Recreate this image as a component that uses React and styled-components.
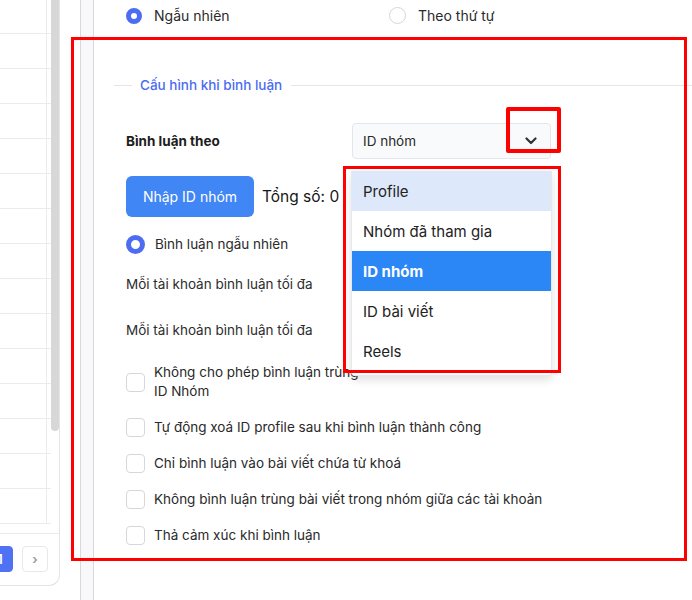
import React from "react";
import styled, { createGlobalStyle } from "styled-components";

const Global = createGlobalStyle`
  html, body { margin: 0; padding: 0; background: #fff; }
  body { width: 692px; height: 600px; overflow: hidden; font-family: Inter, "Noto Sans", sans-serif; color: #222; }
  * { box-sizing: border-box; }
`;

const Page = styled.div`
  position: relative;
  display: flex;
  width: 692px;
  height: 600px;
  overflow: hidden;
`;

/* ---------- left table card ---------- */
const LeftCard = styled.div`
  width: 60px;
  height: 586px;
  flex: none;
  border-right: 1px solid #e4e4e7;
  border-bottom: 1px solid #e4e4e7;
  border-bottom-right-radius: 11px;
  display: flex;
  flex-direction: column;
  overflow: hidden;
`;

const TableWrap = styled.div`
  height: 533px;
  display: flex;
  flex: none;
`;

const Rows = styled.div`
  width: 51px;
  display: flex;
  flex-direction: column;
`;

const Row = styled.div`
  height: ${(p) => (p.$first ? 34 : 35)}px;
  flex: none;
  display: flex;
  border-bottom: 1px solid #ebebeb;
`;

const CellMain = styled.div`
  width: 47px;
  border-right: 1px solid #ebebeb;
`;

const ScrollTrack = styled.div`
  width: 8px;
  flex: none;
`;

const Thumb = styled.div`
  width: 8px;
  height: 431px;
  background: #d7d7d7;
  border-radius: 0 0 4px 4px;
`;

const Pager = styled.div`
  border-top: 1px solid #ebebeb;
  display: flex;
  justify-content: flex-end;
  gap: 9px;
  padding: 12px 11px 0 0;
`;

const PageBtn = styled.div`
  width: 26px;
  height: 26px;
  flex: none;
  border-radius: 4px;
  display: flex;
  align-items: center;
  justify-content: center;
  font-size: 13px;
  font-weight: 600;
  background: ${(p) => (p.$active ? "#4f72f4" : "#fff")};
  color: ${(p) => (p.$active ? "#fff" : "#999")};
  border: 1px solid ${(p) => (p.$active ? "#4f72f4" : "#e8e8e8")};
`;

const Spacer = styled.div`
  width: 20px;
  flex: none;
`;

const Strip = styled.div`
  width: 14px;
  flex: none;
  height: 600px;
  background: #f8f8fa;
  border-left: 1px solid #d6d9df;
  border-right: 1px solid #d6d9df;
`;

/* ---------- main ---------- */
const Main = styled.div`
  flex: 1;
  display: flex;
  flex-direction: column;
  padding-top: 7px;
`;

const TopRadios = styled.div`
  display: grid;
  grid-template-columns: 263px 1fr;
  padding-left: 32px;
  height: 16px;
`;

const RadioLabel = styled.label`
  display: flex;
  align-items: center;
  gap: 12px;
  font-size: 14px;
  line-height: 16px;
  color: #2a2a2a;
`;

const Radio = styled.span`
  width: ${(p) => p.$size}px;
  height: ${(p) => p.$size}px;
  flex: none;
  border-radius: 50%;
  background: #fff;
  border: ${(p) => (p.$checked ? "5px solid #4e6cf2" : "1px solid #d3d6dc")};
`;

const Legend = styled.div`
  display: flex;
  align-items: center;
  gap: 8px;
  margin: 52px 0 0 20px;
  height: 20px;
  font-size: 13.5px;
  font-weight: 500;
  color: #4a6cf0;
  white-space: nowrap;
  &::before {
    content: "";
    width: 18px;
    height: 1px;
    background: #e3e5e8;
  }
  &::after {
    content: "";
    flex: 1;
    height: 1px;
    margin-left: 1px;
    background: #e3e5e8;
  }
`;

const Body = styled.div`
  padding-left: 32px;
  display: flex;
  flex-direction: column;
`;

const FieldRow = styled.div`
  display: grid;
  grid-template-columns: 226px 199px;
  align-items: center;
  margin-top: ${(p) => p.$mt}px;
`;

const FieldLabel = styled.div`
  font-size: 13.5px;
  font-weight: ${(p) => (p.$bold ? 700 : 400)};
  color: ${(p) => (p.$bold ? "#1d1d1d" : "#2d2d2d")};
`;

const SelectBox = styled.div`
  position: relative;
  height: 36px;
  background: #f9fafb;
  border: 1px solid #e3e6eb;
  border-radius: 4px;
  display: flex;
  align-items: center;
  justify-content: space-between;
  padding: 0 13px 0 10px;
  font-size: 13.5px;
  color: #2a2a2a;
`;

const NumberInput = styled.div`
  height: 36px;
  border: 1px solid #e3e6eb;
  border-radius: 4px;
  background: #fff;
`;

const Menu = styled.div`
  position: absolute;
  top: 47px;
  left: -2px;
  width: 201px;
  background: #fff;
  border: 1px solid #e6e8ec;
  border-top: none;
  border-radius: 0 0 4px 4px;
  box-shadow: 0 4px 10px rgba(0, 0, 0, 0.12);
  padding-bottom: 4px;
  z-index: 5;
`;

const MenuItem = styled.div`
  height: 40px;
  display: flex;
  align-items: center;
  padding-left: 11px;
  font-size: 15px;
  font-weight: ${(p) => (p.$selected ? 700 : 400)};
  color: ${(p) => (p.$selected ? "#fff" : "#222")};
  background: ${(p) => (p.$selected ? "#2c87f6" : p.$hover ? "#dde8fb" : "#fff")};
`;

const ButtonRow = styled.div`
  display: flex;
  align-items: center;
  gap: 8px;
  margin-top: 17px;
`;

const PrimaryButton = styled.button`
  width: 128px;
  height: 41px;
  border: none;
  border-radius: 6px;
  background: #4086f4;
  color: #fff;
  font-family: inherit;
  font-size: 14px;
  padding: 0;
`;

const Total = styled.span`
  font-size: 15.5px;
  color: #161616;
`;

const RadioRow = styled(RadioLabel)`
  margin-top: 17px;
  height: 20px;
  gap: 10px;
  font-size: 13.5px;
`;

const CheckList = styled.div`
  display: flex;
  flex-direction: column;
  gap: 17px;
  margin-top: 15px;
`;

const CheckRow = styled.label`
  display: flex;
  align-items: center;
  gap: 9px;
  font-size: 13.5px;
  line-height: 19px;
  color: #2a2a2a;
`;

const CheckLabel = styled.span`
  max-width: ${(p) => (p.$narrow ? "205px" : "none")};
`;

const Box = styled.span`
  width: 19px;
  height: 19px;
  flex: none;
  border: 1px solid #d4d7dd;
  border-radius: 4px;
  background: #fff;
`;

/* ---------- annotation overlays ---------- */
const Mark = styled.div`
  position: absolute;
  left: ${(p) => p.$x}px;
  top: ${(p) => p.$y}px;
  width: ${(p) => p.$w}px;
  height: ${(p) => p.$h}px;
  border: ${(p) => p.$t}px solid #ff0000;
  border-radius: ${(p) => p.$r || 0}px;
  pointer-events: none;
  z-index: 10;
`;

const Chevron = () => (
  <svg width="12" height="8" viewBox="0 0 12 8" fill="none">
    <path d="M1.5 1.5 6 6l4.5-4.5" stroke="#333" strokeWidth="2.2" strokeLinecap="round" strokeLinejoin="round" />
  </svg>
);

const options = ["Profile", "Nhóm đã tham gia", "ID nhóm", "ID bài viết", "Reels"];
const checks = [
  "Tự động xoá ID profile sau khi bình luận thành công",
  "Chỉ bình luận vào bài viết chứa từ khoá",
  "Không bình luận trùng bài viết trong nhóm giữa các tài khoản",
  "Thả cảm xúc khi bình luận",
];

export default function App() {
  return (
    <>
      <Global />
      <Page>
        <LeftCard>
          <TableWrap>
            <Rows>
              {Array.from({ length: 15 }).map((_, i) => (
                <Row key={i} $first={i === 0}>
                  <CellMain />
                </Row>
              ))}
            </Rows>
            <ScrollTrack>
              <Thumb />
            </ScrollTrack>
          </TableWrap>
          <Pager>
            <PageBtn $active>1</PageBtn>
            <PageBtn>›</PageBtn>
          </Pager>
        </LeftCard>
        <Spacer />
        <Strip />
        <Main>
          <TopRadios>
            <RadioLabel>
              <Radio $size={16} $checked />
              Ngẫu nhiên
            </RadioLabel>
            <RadioLabel>
              <Radio $size={17} />
              Theo thứ tự
            </RadioLabel>
          </TopRadios>

          <Legend>Cấu hình khi bình luận</Legend>

          <Body>
            <FieldRow $mt={28}>
              <FieldLabel $bold>Bình luận theo</FieldLabel>
              <SelectBox>
                ID nhóm
                <Chevron />
                <Menu>
                  {options.map((o) => (
                    <MenuItem key={o} $hover={o === "Profile"} $selected={o === "ID nhóm"}>
                      {o}
                    </MenuItem>
                  ))}
                </Menu>
              </SelectBox>
            </FieldRow>

            <ButtonRow>
              <PrimaryButton>Nhập ID nhóm</PrimaryButton>
              <Total>Tổng số: 0</Total>
            </ButtonRow>

            <RadioRow>
              <Radio $size={19} $checked />
              Bình luận ngẫu nhiên
            </RadioRow>

            <FieldRow $mt={12}>
              <FieldLabel>Mỗi tài khoản bình luận tối đa</FieldLabel>
              <NumberInput />
            </FieldRow>
            <FieldRow $mt={10}>
              <FieldLabel>Mỗi tài khoản bình luận tối đa</FieldLabel>
              <NumberInput />
            </FieldRow>

            <CheckList>
              <CheckRow>
                <Box />
                <CheckLabel $narrow>Không cho phép bình luận trùng ID Nhóm</CheckLabel>
              </CheckRow>
              {checks.map((c) => (
                <CheckRow key={c}>
                  <Box />
                  <CheckLabel>{c}</CheckLabel>
                </CheckRow>
              ))}
            </CheckList>
          </Body>
        </Main>

        <Mark $x={71} $y={37} $w={616} $h={524} $t={3} />
        <Mark $x={506} $y={107} $w={55} $h={46} $t={4} $r={2} />
        <Mark $x={343} $y={166} $w={218} $h={207} $t={3} />
      </Page>
    </>
  );
}
